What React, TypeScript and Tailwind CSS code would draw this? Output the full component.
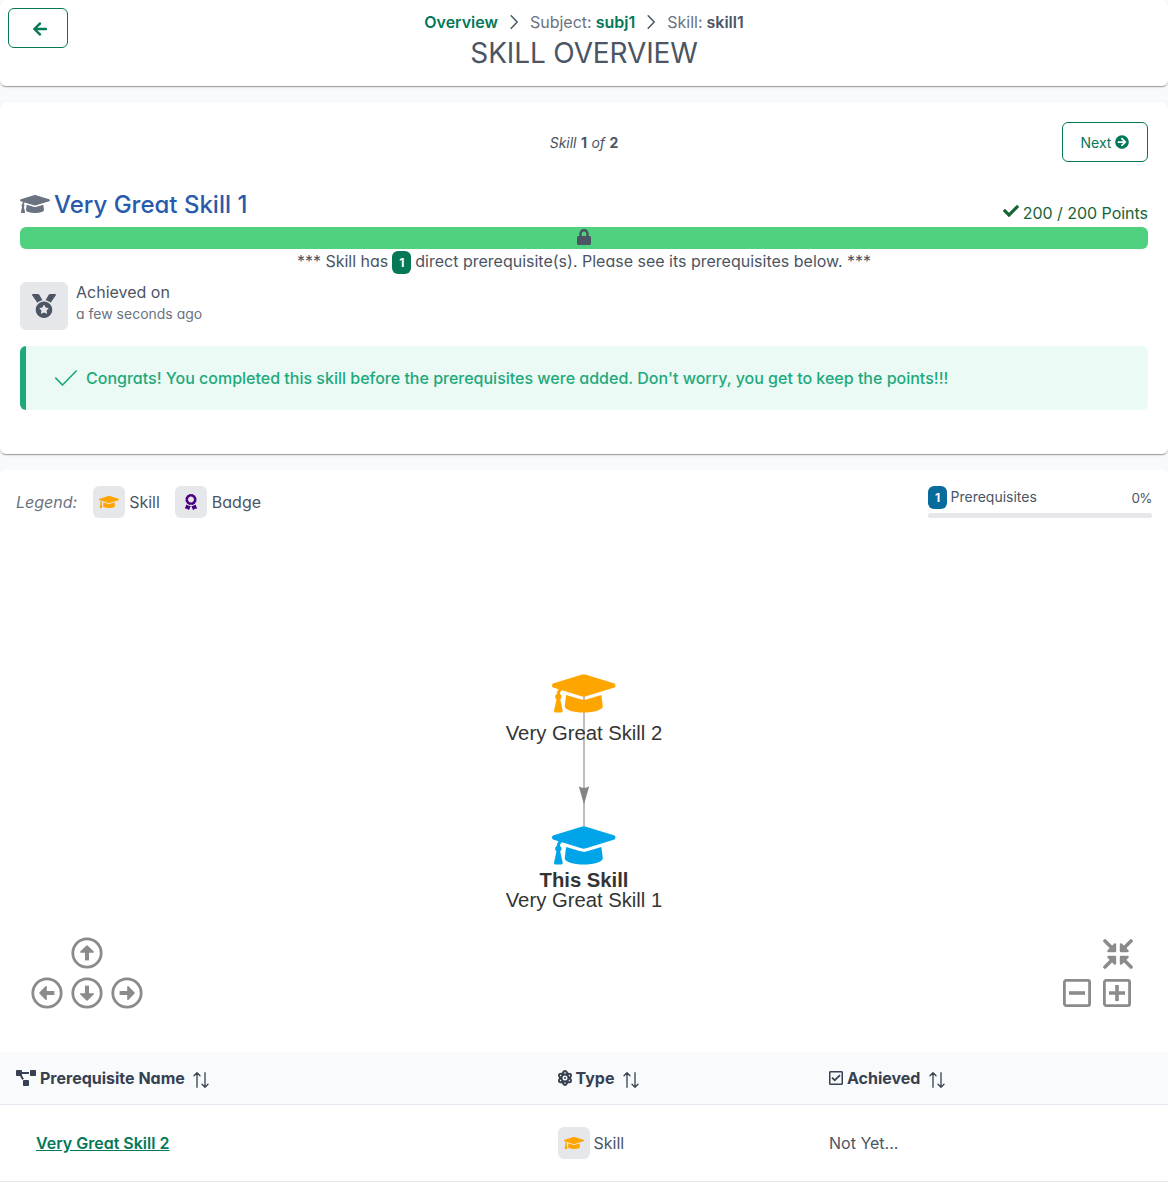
import type { ReactNode } from 'react';
import {
  FaArrowCircleRight,
  FaArrowLeft,
  FaAtom,
  FaAward,
  FaCheck,
  FaGraduationCap,
  FaLock,
  FaMedal,
  FaProjectDiagram,
  FaRegCheckSquare,
} from 'react-icons/fa';

const CARD =
  'bg-white rounded-md shadow-[0_2px_1px_-1px_rgba(0,0,0,0.2),0_1px_1px_0_rgba(0,0,0,0.14),0_1px_3px_0_rgba(0,0,0,0.12)]';

function Chevron() {
  return (
    <svg className="mx-[9px] h-[14px] w-[14px]" viewBox="0 0 14 14" fill="none" stroke="#4b5563" strokeWidth="1.5" strokeLinecap="round" strokeLinejoin="round">
      <path d="M4.2 .8 10.2 7 4.2 13.2" />
    </svg>
  );
}

function SortIcon() {
  return (
    <svg className="ml-[8.25px] mt-[3px] h-4 w-4" viewBox="0 0 16 16" fill="none" stroke="#374151" strokeWidth="1.3" strokeLinecap="round" strokeLinejoin="round">
      <path d="M4 15.3V.9M1 3.7 4 .7l3 3M12 .7v14.4M9 12.3l3 3 3-3" />
    </svg>
  );
}

function IconTile({ children }: { children: ReactNode }) {
  return <span className="flex h-8 w-8 items-center justify-center rounded-md bg-[#e5e7eb]">{children}</span>;
}

function ArrowButton({ turn }: { turn: string }) {
  return (
    <svg className={`h-8 w-8 ${turn}`} viewBox="0 0 32 32" fill="none" stroke="#8b8b8b">
      <circle cx="16" cy="16" r="14.2" strokeWidth="2.8" />
      <path d="M16 23.4V13" strokeWidth="4" />
      <path d="M16 9 22.2 15H9.8Z" fill="#8b8b8b" strokeWidth="1.6" strokeLinejoin="round" />
    </svg>
  );
}

function ZoomButton({ plus }: { plus?: boolean }) {
  return (
    <svg className="h-7 w-7" viewBox="0 0 28 28" fill="none" stroke="#8b8b8b">
      <rect x="1.4" y="1.4" width="25.2" height="25.2" rx="1.8" strokeWidth="2.8" />
      <path d={plus ? 'M6 14h16M14 6v16' : 'M6 14h16'} strokeWidth="3.6" />
    </svg>
  );
}

function FitButton() {
  return (
    <svg className="h-[30px] w-[30px]" viewBox="0 0 30 30" fill="#8b8b8b" stroke="#8b8b8b" strokeLinejoin="round" strokeLinecap="round">
      {['', 'rotate(90 15 15)', 'rotate(180 15 15)', 'rotate(270 15 15)'].map((t) => (
        <g key={t} transform={t || undefined}>
          <path d="M2 2l7.5 7.5" strokeWidth="3.6" />
          <path d="M12 5.4V12H5.4Z" strokeWidth="2.4" />
        </g>
      ))}
    </svg>
  );
}

function HeaderCell({ icon, label }: { icon: ReactNode; label: string }) {
  return (
    <div className="flex items-center font-bold text-[#374151]">
      {icon}
      <span className="ml-1">{label}</span>
      <SortIcon />
    </div>
  );
}

export default function App() {
  return (
    <div className="h-[1182px] w-[1168px] overflow-hidden bg-[#f8fafc] font-['Inter',sans-serif] text-base leading-6 text-[#4b5563] [font-feature-settings:'cv02','cv03','cv04','cv11']">
      <header className={`${CARD} grid h-[86px] grid-cols-[60px_1fr_60px] px-2 pt-2`}>
        <button className="flex h-10 w-[60px] items-center justify-center rounded-md border border-[#047857] pl-1 pt-0.5 text-[#047857]">
          <FaArrowLeft size={16} />
        </button>
        <div className="flex flex-col items-center">
          <nav className="mt-0.5 flex h-6 items-center [word-spacing:-0.5px]">
            <span className="font-semibold text-[#047857]">Overview</span>
            <Chevron />
            <span className="text-[#6b7280]">Subject: <b className="font-semibold text-[#047857]">subj1</b></span>
            <Chevron />
            <span className="text-[#6b7280]">Skill: <b className="font-semibold text-[#4b5563]">skill1</b></span>
          </nav>
          <h1 className="text-[28px] leading-[38px] tracking-[-0.14px]">SKILL OVERVIEW</h1>
        </div>
      </header>

      <section className={`${CARD} mt-4 h-[352px] px-5 pt-5`}>
        <div className="grid h-10 grid-cols-[86px_1fr_86px] items-center text-sm">
          <span />
          <div className="pt-0.5 text-center [word-spacing:0.5px]"><i>Skill</i> <b>1</b> <i>of</i> <b>2</b></div>
          <button className="flex h-10 items-center justify-center gap-1 rounded-md border border-[#047857] text-[#047857]">
            <span className="pt-px">Next</span> <FaArrowCircleRight size={14} />
          </button>
        </div>
        <div className="mt-6 flex h-[41px] justify-between">
          <h2 className="flex h-9 items-center gap-1 text-2xl font-medium text-[#295bac]">
            <FaGraduationCap className="h-6 w-[30px] text-[#6b7280]" />
            <span className="pt-0.5">Very Great Skill 1</span>
          </h2>
          <div className="mb-[2px] flex h-6 items-center gap-1 self-end text-[#166534]">
            <FaCheck size={16} className="mb-1" /> <span className="tracking-[-0.03px]">200 / 200 Points</span>
          </div>
        </div>
        <div className="flex h-[22px] items-start justify-center rounded-md bg-[#50d17f] pt-0.5">
          <FaLock size={16} className="text-[#4b5563]" />
        </div>
        <div className="flex h-[25px] items-start justify-center gap-1">
          <span>*** Skill has</span>
          <span className="mt-[2px] flex h-[23px] w-[19px] items-center justify-center rounded-md bg-[#047857] text-xs font-bold text-white">1</span>
          <span>direct prerequisite(s). Please see its prerequisites below. ***</span>
        </div>
        <div className="mt-2 flex gap-2">
          <span className="flex h-12 w-12 items-center justify-center rounded-md bg-[#e5e7eb]">
            <FaMedal size={24} />
          </span>
          <div>
            <div className="h-[21px] leading-[21px]">Achieved on</div>
            <div className="text-sm leading-[22px] text-[#6b7280]">a few seconds ago</div>
          </div>
        </div>
        <div className="mt-4 flex h-16 items-center rounded-md border-l-[6px] border-[#1ea97c] bg-[#ebfaf4] pl-7 font-medium text-[#1ea97c]">
          <svg className="mr-2 h-6 w-6" viewBox="0 0 24 24" fill="none" stroke="#1ea97c" strokeWidth="1.7" strokeLinecap="round" strokeLinejoin="round">
            <path d="M1.8 12.2 8.5 19 22.2 5" />
          </svg>
          Congrats! You completed this skill before the prerequisites were added. Don't worry, you get to keep the points!!!
        </div>
      </section>

      <section className="mt-4 h-[712px] rounded-t-md bg-white">
        <div className="flex justify-between px-4 pt-4">
          <div className="flex h-8 items-center">
            <i className="mr-4 text-[#6b7280]">Legend:</i>
            <IconTile><FaGraduationCap size={16} className="w-5 text-[#ffa500]" /></IconTile>
            <span className="ml-1 mr-[15px]">Skill</span>
            <IconTile><FaAward size={16} className="ml-px text-[#4b0082]" /></IconTile>
            <span className="ml-[5px]">Badge</span>
          </div>
          <div className="w-56 text-sm">
            <div className="flex h-[27px] items-start justify-between leading-[22px]">
              <span className="flex gap-[3.5px]">
                <span className="flex h-[23px] w-[19px] items-center justify-center rounded-md bg-[#076b9c] text-xs font-bold text-white">1</span>
                Prerequisites
              </span>
              <span className="pt-px text-[13.4px] tracking-[-0.5px]">0%</span>
            </div>
            <div className="h-[5px] rounded-md bg-[#e5e7eb]" />
          </div>
        </div>

        <div className="relative h-[534px] font-['Liberation_Sans',Arial,sans-serif]">
          <svg className="absolute left-[484px] top-[142px]" width="200" height="260" viewBox="0 0 200 260">
            <path d="M100 32v152" stroke="#bdbdbd" strokeWidth="2" />
            <path d="M94.8 126.3Q100 129.5 105.2 126.3L100 144.5Z" fill="#848484" />
            <g fontSize="20.27" fill="#343434" textAnchor="middle">
              <text x="100" y="80">Very Great Skill 2</text>
              <text x="100" y="227" fontWeight="bold">This Skill</text>
              <text x="100" y="247">Very Great Skill 1</text>
            </g>
          </svg>
          <FaGraduationCap className="absolute left-[552.2px] top-[150.3px] h-[51px] w-[63.5px] text-[#ffa500]" />
          <FaGraduationCap className="absolute left-[552.2px] top-[302.3px] h-[51px] w-[63.5px] text-[#00a4e9]" />
          <div className="absolute left-[30.7px] top-[419px] grid grid-cols-3 gap-2">
            <span />
            <ArrowButton turn="rotate-0" />
            <span />
            <ArrowButton turn="-rotate-90" />
            <ArrowButton turn="rotate-180" />
            <ArrowButton turn="rotate-90" />
          </div>
          <div className="absolute left-[1063px] top-[421px] grid grid-cols-[28px_30px] gap-x-3 gap-y-[10px]">
            <span />
            <FitButton />
            <ZoomButton />
            <ZoomButton plus />
          </div>
        </div>

        <div className="grid h-[53px] grid-cols-[541.5px_271.5px_1fr] items-center border-b border-[#e2e8f0] bg-[#f8fafc] pl-4">
          <HeaderCell icon={<FaProjectDiagram className="h-4 w-5" />} label="Prerequisite Name" />
          <HeaderCell icon={<FaAtom className="h-4 w-[14px]" />} label="Type" />
          <HeaderCell icon={<FaRegCheckSquare className="h-4 w-[14px]" />} label="Achieved" />
        </div>
        <div className="grid h-[77px] grid-cols-[541.5px_271.5px_1fr] items-center border-b border-[#e2e8f0] pl-4">
          <a className="ml-5 font-semibold text-[#047857] underline">Very Great Skill 2</a>
          <div className="flex items-center gap-1">
            <IconTile><FaGraduationCap size={16} className="w-5 text-[#ffa500]" /></IconTile>
            Skill
          </div>
          <span>Not Yet...</span>
        </div>
      </section>
    </div>
  );
}
